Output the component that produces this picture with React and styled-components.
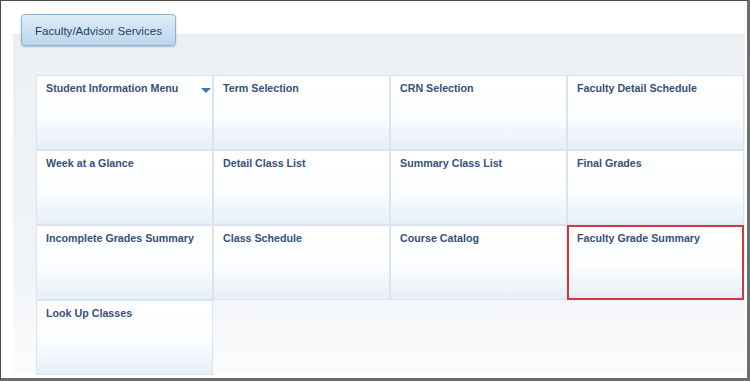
import React from "react";
import styled, { createGlobalStyle } from "styled-components";

const GlobalStyle = createGlobalStyle`
  html, body {
    margin: 0;
    padding: 0;
    background: #ffffff;
  }
`;

const Frame = styled.div`
  width: 750px;
  height: 381px;
  box-sizing: border-box;
  border-left: 1px solid #4a4a4a;
  border-top: 1px solid #4a4a4a;
  border-right: 3px solid #6e6e6e;
  border-bottom: 3px solid #6e6e6e;
  padding-top: 13px;
  overflow: hidden;
  font-family: "Liberation Sans", Arial, sans-serif;
`;

const Tab = styled.div`
  position: relative;
  z-index: 1;
  margin-left: 20px;
  width: 155px;
  height: 32px;
  box-sizing: border-box;
  border: 1px solid #8eb1cf;
  border-radius: 4px;
  background: linear-gradient(#e1eef9, #b9d5ec);
  box-shadow: 0 1px 2px rgba(60, 90, 120, 0.35);
  display: flex;
  align-items: center;
  justify-content: center;
  font-size: 11.6px;
  color: #2b3e57;
`;

const Panel = styled.div`
  margin-left: 12px;
  margin-top: -12px;
  width: 732px;
  height: 340px;
  box-sizing: border-box;
  border-top: 1px solid #e3e9ef;
  background: linear-gradient(#ecf0f4 0%, #f1f4f7 70%, #fbfcfd 100%);
  padding: 40px 0 0 23px;
`;

const Grid = styled.div`
  display: grid;
  grid-template-columns: repeat(4, 177px);
  grid-auto-rows: 75px;
`;

const Tile = styled.div`
  position: relative;
  box-sizing: border-box;
  border: 1px solid #dae4ee;
  background: linear-gradient(#ffffff 0%, #fcfdff 55%, #e6eff8 100%);
  padding: 6px 9px;
  font-size: 10.7px;
  font-weight: bold;
  color: #36507a;
  ${(p) =>
    p.$selected &&
    `
    border: 2px solid #cc3a3f;
    padding: 5px 8px;
  `}
`;

const Arrow = styled.span`
  position: absolute;
  right: 1px;
  top: 12px;
  width: 0;
  height: 0;
  border-left: 5px solid transparent;
  border-right: 5px solid transparent;
  border-top: 5px solid #3f78ad;
`;

const items = [
  "Student Information Menu",
  "Term Selection",
  "CRN Selection",
  "Faculty Detail Schedule",
  "Week at a Glance",
  "Detail Class List",
  "Summary Class List",
  "Final Grades",
  "Incomplete Grades Summary",
  "Class Schedule",
  "Course Catalog",
  "Faculty Grade Summary",
  "Look Up Classes",
];

export default function App() {
  return (
    <>
      <GlobalStyle />
      <Frame>
        <Tab>Faculty/Advisor Services</Tab>
        <Panel>
          <Grid>
            {items.map((label, i) => (
              <Tile key={label} $selected={label === "Faculty Grade Summary"}>
                {label}
                {i === 0 && <Arrow />}
              </Tile>
            ))}
          </Grid>
        </Panel>
      </Frame>
    </>
  );
}
